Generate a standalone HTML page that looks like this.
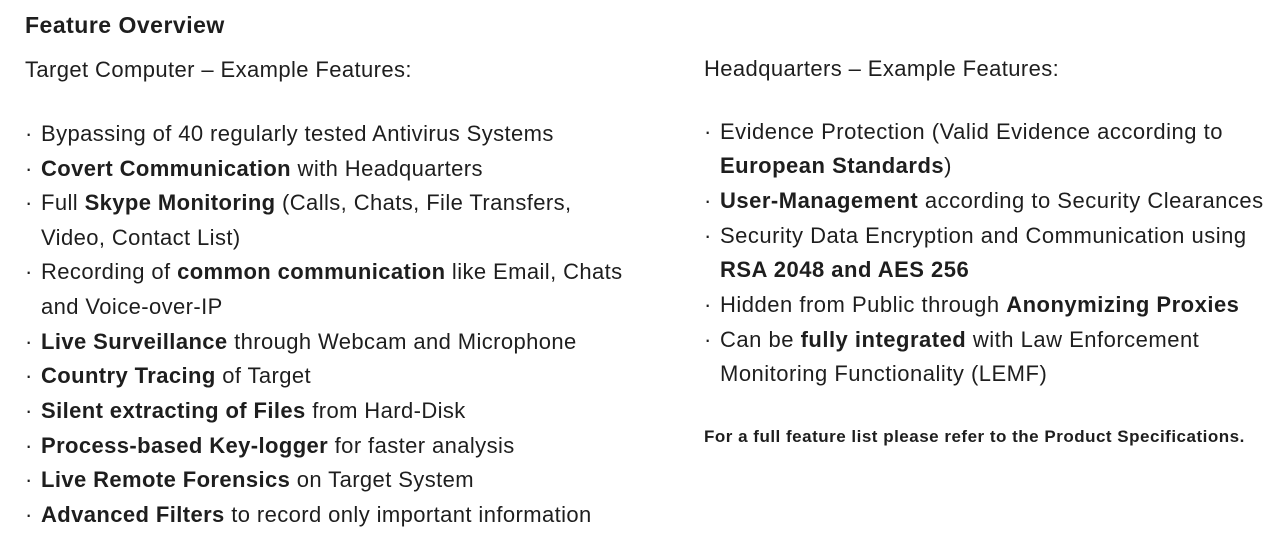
<!DOCTYPE html>
<html><head><meta charset="utf-8"><style>
body{margin:0;width:1278px;height:533px;background:#fff;position:relative;overflow:hidden;font-family:"Liberation Sans",sans-serif;color:#1e1e1e}
.l{position:absolute;white-space:nowrap;font-size:22px;line-height:24px;letter-spacing:0.4px}
.d{position:absolute;left:-16px}
b{font-weight:bold}
.t{font-size:23px;font-weight:bold;letter-spacing:0.5px}
</style></head><body>
<div class="l t" style="left:25px;top:13px">Feature Overview</div>
<div class="l" style="left:25px;top:58px">Target Computer – Example Features:</div>
<div class="l" style="left:41px;top:122px"><span class="d">·</span>Bypassing of 40 regularly tested Antivirus Systems</div>
<div class="l" style="left:41px;top:157px"><span class="d">·</span><b>Covert Communication</b> with Headquarters</div>
<div class="l" style="left:41px;top:191px"><span class="d">·</span>Full <b>Skype Monitoring</b> (Calls, Chats, File Transfers,</div>
<div class="l" style="left:41px;top:226px">Video, Contact List)</div>
<div class="l" style="left:41px;top:260px"><span class="d">·</span>Recording of <b>common communication</b> like Email, Chats</div>
<div class="l" style="left:41px;top:295px">and Voice-over-IP</div>
<div class="l" style="left:41px;top:330px"><span class="d">·</span><b>Live Surveillance</b> through Webcam and Microphone</div>
<div class="l" style="left:41px;top:364px"><span class="d">·</span><b>Country Tracing</b> of Target</div>
<div class="l" style="left:41px;top:399px"><span class="d">·</span><b>Silent extracting of Files</b> from Hard-Disk</div>
<div class="l" style="left:41px;top:434px"><span class="d">·</span><b>Process-based Key-logger</b> for faster analysis</div>
<div class="l" style="left:41px;top:468px"><span class="d">·</span><b>Live Remote Forensics</b> on Target System</div>
<div class="l" style="left:41px;top:503px"><span class="d">·</span><b>Advanced Filters</b> to record only important information</div>

<div class="l" style="left:704px;top:57px">Headquarters – Example Features:</div>
<div class="l" style="left:720px;top:120px;letter-spacing:0.5px"><span class="d">·</span>Evidence Protection (Valid Evidence according to</div>
<div class="l" style="left:720px;top:154px;letter-spacing:0.5px"><b>European Standards</b>)</div>
<div class="l" style="left:720px;top:189px;letter-spacing:0.5px"><span class="d">·</span><b>User-Management</b> according to Security Clearances</div>
<div class="l" style="left:720px;top:224px;letter-spacing:0.5px"><span class="d">·</span>Security Data Encryption and Communication using</div>
<div class="l" style="left:720px;top:258px;letter-spacing:0.5px"><b>RSA 2048 and AES 256</b></div>
<div class="l" style="left:720px;top:293px;letter-spacing:0.5px"><span class="d">·</span>Hidden from Public through <b>Anonymizing Proxies</b></div>
<div class="l" style="left:720px;top:328px;letter-spacing:0.5px"><span class="d">·</span>Can be <b>fully integrated</b> with Law Enforcement</div>
<div class="l" style="left:720px;top:362px;letter-spacing:0.5px">Monitoring Functionality (LEMF)</div>
<div class="l" style="left:704px;top:425px;font-size:17px;font-weight:bold;letter-spacing:0.5px">For a full feature list please refer to the Product Specifications.</div>
</body></html>
